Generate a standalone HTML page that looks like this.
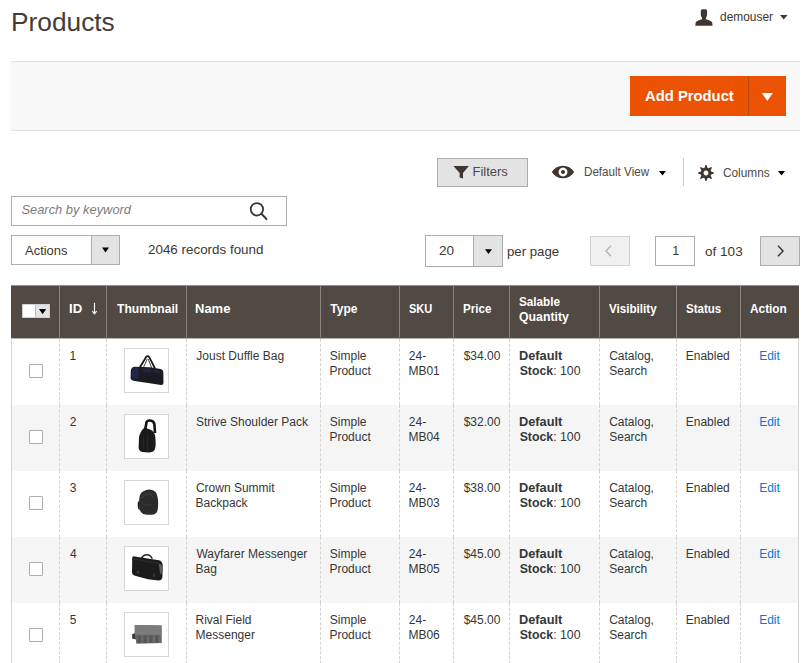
<!DOCTYPE html>
<html><head><meta charset="utf-8"><title>Products</title>
<style>
html,body{margin:0;padding:0;background:#fff;}
body{width:808px;height:663px;overflow:hidden;position:relative;font-family:"Liberation Sans",sans-serif;}
.t{position:absolute;white-space:nowrap;}
.r{position:absolute;box-sizing:border-box;}
b{font-weight:700;}
</style></head><body>
<div class="t" style="left:11.40px;top:6.62px;font-size:25.5px;line-height:31.88px;font-weight:400;color:#463c36;transform:scaleX(1.0311);transform-origin:0 0;">Products</div>
<svg class="r" style="left:694px;top:9px" width="20" height="17" viewBox="0 0 20 17"><path fill="#41362f" d="M8.2 0.3h3.4c0.9 0 1.5 0.8 1.5 1.8v3.6c0 1-0.4 1.9-1 2.6l-0.3 1.9c2.4 0.7 5.4 1.6 6.4 3.2l0.4 3.3H1.3l0.4-3.3c1-1.6 4-2.5 6.4-3.2L7.8 8.3c-0.6-0.7-1-1.6-1-2.6V2.1c0-1 0.6-1.8 1.4-1.8z"/></svg>
<div class="t" style="left:719.82px;top:10.15px;font-size:12.3px;line-height:15.38px;font-weight:400;color:#41362f;transform:scaleX(0.9704);transform-origin:0 0;">demouser</div>
<svg class="r" style="left:780px;top:15px" width="8" height="5" viewBox="0 0 8 5"><path fill="#41362f" d="M0 0h7.5L3.75 4.6z"/></svg>
<div class="r" style="left:11px;top:61px;width:789px;height:70px;background:#f8f8f8;border-top:1px solid #e3e3e3;border-bottom:1px solid #e3e3e3;"></div>
<div class="r" style="left:630px;top:76px;width:156px;height:40px;background:#eb5202;"></div>
<div class="r" style="left:748px;top:76px;width:1px;height:40px;background:#ba4608;"></div>
<div class="t" style="left:645.03px;top:86.72px;font-size:14.8px;line-height:18.5px;font-weight:700;color:#ffffff;">Add Product</div>
<svg class="r" style="left:761px;top:92px" width="13" height="10" viewBox="0 0 13 10"><path fill="#ffffff" d="M0.8 1h11L6.3 9z"/></svg>
<div class="r" style="left:437px;top:158px;width:91px;height:29px;background:#e3e3e3;border:1px solid #adadad;"></div>
<svg class="r" style="left:453px;top:166px" width="17" height="13" viewBox="0 0 17 13"><path fill="#41362f" d="M0.4 0h15.5L10 7v5.5L6.6 11.5V7z"/></svg>
<div class="t" style="left:472.46px;top:163.87px;font-size:13px;line-height:16.25px;font-weight:400;color:#514943;">Filters</div>
<svg class="r" style="left:551px;top:165px" width="24" height="14" viewBox="0 0 24 14"><path fill="#41362f" fill-rule="evenodd" d="M0.8 7C3.5 2.8 7.5 0.7 12 0.7S20.5 2.8 23.2 7C20.5 11.2 16.5 13.3 12 13.3S3.5 11.2 0.8 7zM12 2.6a4.4 4.4 0 1 0 0.01 0zM12 5a2 2 0 1 1-0.01 0z"/></svg>
<div class="t" style="left:584.47px;top:165.34px;font-size:12px;line-height:15.0px;font-weight:400;color:#514943;transform:scaleX(0.9692);transform-origin:0 0;">Default View</div>
<svg class="r" style="left:659px;top:171px" width="8" height="5" viewBox="0 0 8 5"><path fill="#000" d="M0 0h7L3.5 4.6z"/></svg>
<div class="r" style="left:683px;top:158px;width:1px;height:28px;background:#cccccc;"></div>
<svg class="r" style="left:697px;top:164px" width="18" height="18" viewBox="0 0 18 18"><path fill="#41362f" fill-rule="evenodd" d="M7.60 3.78 L8.45 1.12 L9.55 1.12 L10.40 3.78 L11.03 4.10 L11.70 4.32 L14.18 3.04 L14.96 3.82 L13.68 6.30 L13.90 6.97 L14.22 7.60 L16.88 8.45 L16.88 9.55 L14.22 10.40 L13.90 11.03 L13.68 11.70 L14.96 14.18 L14.18 14.96 L11.70 13.68 L11.03 13.90 L10.40 14.22 L9.55 16.88 L8.45 16.88 L7.60 14.22 L6.97 13.90 L6.30 13.68 L3.82 14.96 L3.04 14.18 L4.32 11.70 L4.10 11.03 L3.78 10.40 L1.12 9.55 L1.12 8.45 L3.78 7.60 L4.10 6.97 L4.32 6.30 L3.04 3.82 L3.82 3.04 L6.30 4.32 L6.97 4.10Z M9 6.55 A2.45 2.45 0 1 0 9.01 6.55Z"/></svg>
<div class="t" style="left:722.81px;top:165.94px;font-size:12px;line-height:15.0px;font-weight:400;color:#514943;transform:scaleX(0.9845);transform-origin:0 0;">Columns</div>
<svg class="r" style="left:778px;top:171px" width="8" height="5" viewBox="0 0 8 5"><path fill="#000" d="M0 0h7L3.5 4.6z"/></svg>
<div class="r" style="left:11px;top:196px;width:276px;height:30px;background:#fff;border:1px solid #adadad;"></div>
<div class="t" style="left:21.41px;top:202.47px;font-size:12.9px;line-height:16.12px;font-weight:400;color:#7d7d7d;font-style:italic;">Search by keyword</div>
<svg class="r" style="left:248px;top:201px" width="22" height="20" viewBox="0 0 22 20"><circle cx="8.9" cy="8.3" r="6.2" fill="none" stroke="#3a3330" stroke-width="1.75"/><path d="M13.4 12.8l5.6 5.8" stroke="#3a3330" stroke-width="2"/></svg>
<div class="r" style="left:11px;top:235px;width:109px;height:30px;background:#fff;border:1px solid #adadad;"></div>
<div class="r" style="left:91px;top:236px;width:28px;height:28px;background:#e3e3e3;border-left:1px solid #adadad;"></div>
<div class="t" style="left:25.10px;top:242.56px;font-size:12.8px;line-height:16.0px;font-weight:400;color:#41362f;transform:scaleX(1.0136);transform-origin:0 0;">Actions</div>
<svg class="r" style="left:102px;top:247px" width="8" height="6" viewBox="0 0 8 6"><path fill="#000" d="M0 0.5h7L3.5 5.5z"/></svg>
<div class="t" style="left:147.73px;top:242.66px;font-size:12.5px;line-height:15.62px;font-weight:400;color:#41362f;transform:scaleX(1.0720);transform-origin:0 0;">2046 records found</div>
<div class="r" style="left:425px;top:235px;width:78px;height:32px;background:#fff;border:1px solid #adadad;"></div>
<div class="r" style="left:473px;top:236px;width:29px;height:30px;background:#e3e3e3;border-left:1px solid #adadad;"></div>
<div class="t" style="left:438.82px;top:244.06px;font-size:12.5px;line-height:15.62px;font-weight:400;color:#41362f;transform:scaleX(1.0849);transform-origin:0 0;">20</div>
<svg class="r" style="left:485px;top:249px" width="8" height="6" viewBox="0 0 8 6"><path fill="#000" d="M0 0.3h7L3.5 5z"/></svg>
<div class="t" style="left:506.74px;top:243.76px;font-size:12.8px;line-height:16.0px;font-weight:400;color:#41362f;transform:scaleX(1.0328);transform-origin:0 0;">per page</div>
<div class="r" style="left:590px;top:236px;width:40px;height:30px;background:#f0f0f0;border:1px solid #d1d1d1;"></div>
<svg class="r" style="left:604px;top:245px" width="9" height="12" viewBox="0 0 9 12"><path d="M7 0.8L2 6l5 5.2" fill="none" stroke="#b5b5b5" stroke-width="1.4"/></svg>
<div class="r" style="left:655px;top:236px;width:40px;height:30px;background:#fff;border:1px solid #adadad;"></div>
<div class="t" style="left:672.26px;top:243.86px;font-size:12.5px;line-height:15.62px;font-weight:400;color:#41362f;">1</div>
<div class="t" style="left:705.06px;top:243.76px;font-size:12.8px;line-height:16.0px;font-weight:400;color:#41362f;transform:scaleX(1.0590);transform-origin:0 0;">of 103</div>
<div class="r" style="left:760px;top:236px;width:40px;height:30px;background:#e3e3e3;border:1px solid #adadad;"></div>
<svg class="r" style="left:776px;top:245px" width="9" height="12" viewBox="0 0 9 12"><path d="M2 0.8L7 6l-5 5.2" fill="none" stroke="#41362f" stroke-width="1.5"/></svg>
<div class="r" style="left:11px;top:286px;width:788px;height:52px;background:#514943;"></div>
<div class="r" style="left:11px;top:285px;width:788px;height:1px;background:rgba(81,73,67,0.6);"></div>
<div class="r" style="left:11px;top:338px;width:788px;height:1px;background:rgba(81,73,67,0.4);"></div>
<div class="r" style="left:59px;top:285px;width:1px;height:54px;background:linear-gradient(to bottom,rgba(138,131,127,0.6) 0,rgba(138,131,127,0.6) 1px,#8a837f 1px,#8a837f 52px,rgba(138,131,127,0.4) 52px);"></div>
<div class="r" style="left:106px;top:285px;width:1px;height:54px;background:linear-gradient(to bottom,rgba(138,131,127,0.6) 0,rgba(138,131,127,0.6) 1px,#8a837f 1px,#8a837f 52px,rgba(138,131,127,0.4) 52px);"></div>
<div class="r" style="left:186px;top:285px;width:1px;height:54px;background:linear-gradient(to bottom,rgba(138,131,127,0.6) 0,rgba(138,131,127,0.6) 1px,#8a837f 1px,#8a837f 52px,rgba(138,131,127,0.4) 52px);"></div>
<div class="r" style="left:320px;top:285px;width:1px;height:54px;background:linear-gradient(to bottom,rgba(138,131,127,0.6) 0,rgba(138,131,127,0.6) 1px,#8a837f 1px,#8a837f 52px,rgba(138,131,127,0.4) 52px);"></div>
<div class="r" style="left:399px;top:285px;width:1px;height:54px;background:linear-gradient(to bottom,rgba(138,131,127,0.6) 0,rgba(138,131,127,0.6) 1px,#8a837f 1px,#8a837f 52px,rgba(138,131,127,0.4) 52px);"></div>
<div class="r" style="left:453px;top:285px;width:1px;height:54px;background:linear-gradient(to bottom,rgba(138,131,127,0.6) 0,rgba(138,131,127,0.6) 1px,#8a837f 1px,#8a837f 52px,rgba(138,131,127,0.4) 52px);"></div>
<div class="r" style="left:509px;top:285px;width:1px;height:54px;background:linear-gradient(to bottom,rgba(138,131,127,0.6) 0,rgba(138,131,127,0.6) 1px,#8a837f 1px,#8a837f 52px,rgba(138,131,127,0.4) 52px);"></div>
<div class="r" style="left:599px;top:285px;width:1px;height:54px;background:linear-gradient(to bottom,rgba(138,131,127,0.6) 0,rgba(138,131,127,0.6) 1px,#8a837f 1px,#8a837f 52px,rgba(138,131,127,0.4) 52px);"></div>
<div class="r" style="left:676px;top:285px;width:1px;height:54px;background:linear-gradient(to bottom,rgba(138,131,127,0.6) 0,rgba(138,131,127,0.6) 1px,#8a837f 1px,#8a837f 52px,rgba(138,131,127,0.4) 52px);"></div>
<div class="r" style="left:740px;top:285px;width:1px;height:54px;background:linear-gradient(to bottom,rgba(138,131,127,0.6) 0,rgba(138,131,127,0.6) 1px,#8a837f 1px,#8a837f 52px,rgba(138,131,127,0.4) 52px);"></div>
<div class="r" style="left:12px;top:405px;width:786px;height:66px;background:#f5f5f5;"></div>
<div class="r" style="left:12px;top:537px;width:786px;height:66px;background:#f5f5f5;"></div>
<svg class="r" style="left:0;top:338px" width="808" height="325"><g stroke="#d2d2d2" stroke-width="1" stroke-dasharray="3 1.85"><line x1="59.5" y1="0.90" x2="59.5" y2="66.90"/><line x1="59.5" y1="66.90" x2="59.5" y2="132.90"/><line x1="59.5" y1="132.90" x2="59.5" y2="198.90"/><line x1="59.5" y1="198.90" x2="59.5" y2="264.90"/><line x1="59.5" y1="264.90" x2="59.5" y2="330.90"/><line x1="106.5" y1="0.90" x2="106.5" y2="66.90"/><line x1="106.5" y1="66.90" x2="106.5" y2="132.90"/><line x1="106.5" y1="132.90" x2="106.5" y2="198.90"/><line x1="106.5" y1="198.90" x2="106.5" y2="264.90"/><line x1="106.5" y1="264.90" x2="106.5" y2="330.90"/><line x1="186.5" y1="0.90" x2="186.5" y2="66.90"/><line x1="186.5" y1="66.90" x2="186.5" y2="132.90"/><line x1="186.5" y1="132.90" x2="186.5" y2="198.90"/><line x1="186.5" y1="198.90" x2="186.5" y2="264.90"/><line x1="186.5" y1="264.90" x2="186.5" y2="330.90"/><line x1="320.5" y1="0.90" x2="320.5" y2="66.90"/><line x1="320.5" y1="66.90" x2="320.5" y2="132.90"/><line x1="320.5" y1="132.90" x2="320.5" y2="198.90"/><line x1="320.5" y1="198.90" x2="320.5" y2="264.90"/><line x1="320.5" y1="264.90" x2="320.5" y2="330.90"/><line x1="399.5" y1="0.90" x2="399.5" y2="66.90"/><line x1="399.5" y1="66.90" x2="399.5" y2="132.90"/><line x1="399.5" y1="132.90" x2="399.5" y2="198.90"/><line x1="399.5" y1="198.90" x2="399.5" y2="264.90"/><line x1="399.5" y1="264.90" x2="399.5" y2="330.90"/><line x1="453.5" y1="0.90" x2="453.5" y2="66.90"/><line x1="453.5" y1="66.90" x2="453.5" y2="132.90"/><line x1="453.5" y1="132.90" x2="453.5" y2="198.90"/><line x1="453.5" y1="198.90" x2="453.5" y2="264.90"/><line x1="453.5" y1="264.90" x2="453.5" y2="330.90"/><line x1="509.5" y1="0.90" x2="509.5" y2="66.90"/><line x1="509.5" y1="66.90" x2="509.5" y2="132.90"/><line x1="509.5" y1="132.90" x2="509.5" y2="198.90"/><line x1="509.5" y1="198.90" x2="509.5" y2="264.90"/><line x1="509.5" y1="264.90" x2="509.5" y2="330.90"/><line x1="599.5" y1="0.90" x2="599.5" y2="66.90"/><line x1="599.5" y1="66.90" x2="599.5" y2="132.90"/><line x1="599.5" y1="132.90" x2="599.5" y2="198.90"/><line x1="599.5" y1="198.90" x2="599.5" y2="264.90"/><line x1="599.5" y1="264.90" x2="599.5" y2="330.90"/><line x1="676.5" y1="0.90" x2="676.5" y2="66.90"/><line x1="676.5" y1="66.90" x2="676.5" y2="132.90"/><line x1="676.5" y1="132.90" x2="676.5" y2="198.90"/><line x1="676.5" y1="198.90" x2="676.5" y2="264.90"/><line x1="676.5" y1="264.90" x2="676.5" y2="330.90"/><line x1="740.5" y1="0.90" x2="740.5" y2="66.90"/><line x1="740.5" y1="66.90" x2="740.5" y2="132.90"/><line x1="740.5" y1="132.90" x2="740.5" y2="198.90"/><line x1="740.5" y1="198.90" x2="740.5" y2="264.90"/><line x1="740.5" y1="264.90" x2="740.5" y2="330.90"/></g></svg>
<div class="r" style="left:11px;top:338px;width:1px;height:325px;background:#d6d6d6;"></div>
<div class="r" style="left:798px;top:338px;width:1px;height:325px;background:#d6d6d6;"></div>
<div class="r" style="left:22px;top:304px;width:28px;height:14px;background:#fff;border:1px solid #d0d0d0;"></div>
<div class="r" style="left:35px;top:305px;width:14px;height:12px;background:#e3e3e3;border-left:1px solid #bdbdbd;"></div>
<svg class="r" style="left:39px;top:309px" width="8" height="6" viewBox="0 0 8 6"><path fill="#000" d="M0 0h7.2L3.6 5.2z"/></svg>
<div class="t" style="left:68.54px;top:301.74px;font-size:12px;line-height:15.0px;font-weight:700;color:#ffffff;transform:scaleX(1.0987);transform-origin:0 0;">ID</div>
<svg class="r" style="left:91px;top:302px" width="7" height="13" viewBox="0 0 7 13"><path d="M3.5 0.8v11" stroke="#fff" stroke-width="1.1"/><path d="M1.4 9.2L3.5 11.9 5.6 9.2" fill="none" stroke="#fff" stroke-width="1.1"/></svg>
<div class="t" style="left:116.68px;top:301.74px;font-size:12px;line-height:15.0px;font-weight:700;color:#ffffff;transform:scaleX(1.0084);transform-origin:0 0;">Thumbnail</div>
<div class="t" style="left:195.46px;top:301.74px;font-size:12px;line-height:15.0px;font-weight:700;color:#ffffff;transform:scaleX(1.0825);transform-origin:0 0;">Name</div>
<div class="t" style="left:330.28px;top:301.74px;font-size:12px;line-height:15.0px;font-weight:700;color:#ffffff;">Type</div>
<div class="t" style="left:408.77px;top:301.74px;font-size:12px;line-height:15.0px;font-weight:700;color:#ffffff;transform:scaleX(0.9200);transform-origin:0 0;">SKU</div>
<div class="t" style="left:462.85px;top:301.74px;font-size:12px;line-height:15.0px;font-weight:700;color:#ffffff;transform:scaleX(0.9666);transform-origin:0 0;">Price</div>
<div class="t" style="left:519.25px;top:294.74px;font-size:12px;line-height:15.0px;font-weight:700;color:#ffffff;transform:scaleX(0.9753);transform-origin:0 0;">Salable</div>
<div class="t" style="left:519.11px;top:309.54px;font-size:12px;line-height:15.0px;font-weight:700;color:#ffffff;transform:scaleX(1.0245);transform-origin:0 0;">Quantity</div>
<div class="t" style="left:608.94px;top:301.74px;font-size:12px;line-height:15.0px;font-weight:700;color:#ffffff;transform:scaleX(0.9690);transform-origin:0 0;">Visibility</div>
<div class="t" style="left:686.46px;top:301.74px;font-size:12px;line-height:15.0px;font-weight:700;color:#ffffff;transform:scaleX(0.9576);transform-origin:0 0;">Status</div>
<div class="t" style="left:750.00px;top:301.74px;font-size:12px;line-height:15.0px;font-weight:700;color:#ffffff;transform:scaleX(0.9862);transform-origin:0 0;">Action</div>
<div class="r" style="left:29px;top:364px;width:14px;height:14px;background:#fff;border:1px solid #adadad;border-radius:1px;"></div>
<div class="t" style="left:69.40px;top:349.14px;font-size:12px;line-height:15.0px;font-weight:400;color:#363636;">1</div>
<div class="r" style="left:124px;top:348px;width:45px;height:45px;background:#fff;border:1px solid #d6d6d6;"></div>
<div class="r" style="left:124px;top:348px;width:45px;height:45px"><svg width="45" height="45" viewBox="0 0 45 45"><path d="M15.5 20L22 9.2Q23.7 7.2 25.3 9.2L31 20.5" fill="none" stroke="#1a1a1a" stroke-width="1.8"/><path d="M19 20.5L23.2 11M28 20.8L24.2 11" fill="none" stroke="#333" stroke-width="0.9"/><path d="M6.8 23Q7 19 11 18.8l15 0.5 10.5 1.8q2.8 0.6 2.8 3.5l0.2 10.5q-0.2 2.2-2.5 2l-13-2-13.5-2.2Q6.5 32.3 6.6 30z" fill="#1b1c22"/><path d="M8 22.5Q8.5 19.5 11 19.5l3.5 0.3v11.3l-3.5-0.6Q8 30.3 8 28z" fill="#23264a"/><path d="M19 20.4l8 0.2-0.3 4-7.7-0.3z" fill="#23264a" opacity="0.9"/><path d="M29 21.5l7 1.2v3l-7-1z" fill="#222543" opacity="0.8"/></svg></div>
<div class="t" style="left:196.32px;top:349.14px;font-size:12px;line-height:15.0px;font-weight:400;color:#363636;">Joust Duffle Bag</div>
<div class="t" style="left:329.86px;top:349.14px;font-size:12px;line-height:15.0px;font-weight:400;color:#363636;">Simple</div>
<div class="t" style="left:329.44px;top:364.14px;font-size:12px;line-height:15.0px;font-weight:400;color:#363636;">Product</div>
<div class="t" style="left:408.80px;top:349.14px;font-size:12px;line-height:15.0px;font-weight:400;color:#363636;">24-</div>
<div class="t" style="left:408.44px;top:364.14px;font-size:12px;line-height:15.0px;font-weight:400;color:#363636;">MB01</div>
<div class="t" style="left:463.68px;top:349.14px;font-size:12px;line-height:15.0px;font-weight:400;color:#363636;">$34.00</div>
<div class="t" style="left:519.37px;top:348.85px;font-size:12.3px;line-height:15.38px;font-weight:700;color:#363636;transform:scaleX(1.0390);transform-origin:0 0;">Default</div>
<div class="t" style="left:519.65px;top:363.85px;font-size:12.3px;line-height:15.38px;font-weight:400;color:#363636;"><b>Stock</b>: 100</div>
<div class="t" style="left:609.20px;top:349.14px;font-size:12px;line-height:15.0px;font-weight:400;color:#363636;">Catalog,</div>
<div class="t" style="left:609.26px;top:364.14px;font-size:12px;line-height:15.0px;font-weight:400;color:#363636;">Search</div>
<div class="t" style="left:685.74px;top:349.14px;font-size:12px;line-height:15.0px;font-weight:400;color:#363636;">Enabled</div>
<div class="t" style="left:759.14px;top:349.14px;font-size:12px;line-height:15.0px;font-weight:400;color:#007bdb;">Edit</div>
<div class="r" style="left:29px;top:430px;width:14px;height:14px;background:#fff;border:1px solid #adadad;border-radius:1px;"></div>
<div class="t" style="left:69.70px;top:415.14px;font-size:12px;line-height:15.0px;font-weight:400;color:#363636;">2</div>
<div class="r" style="left:124px;top:414px;width:45px;height:45px;background:#fff;border:1px solid #d6d6d6;"></div>
<div class="r" style="left:124px;top:414px;width:45px;height:45px"><svg width="45" height="45" viewBox="0 0 45 45"><path d="M21.5 14.5L22.5 8.2Q23.2 6.4 25.5 6.5L27.5 6.8Q30 7.5 30.4 10.5L31 19" fill="none" stroke="#141414" stroke-width="2.6"/><path d="M19.8 12.5l2.6 0.4 0.6 3.2-2.8-0.4z" fill="#333"/><path d="M15 23.5Q16 17.5 20.5 13.5L26 15.5Q30.8 17 31.3 23Q32.2 32 30.8 35.5Q29.5 38.5 24.5 38.5L18.5 38Q15 37.2 14.6 34z" fill="#1a1a1a"/><path d="M19 24l0.4 12M23.5 22l0.2 14.5" stroke="#2e2e2e" stroke-width="0.8"/></svg></div>
<div class="t" style="left:195.96px;top:415.14px;font-size:12px;line-height:15.0px;font-weight:400;color:#363636;">Strive Shoulder Pack</div>
<div class="t" style="left:329.86px;top:415.14px;font-size:12px;line-height:15.0px;font-weight:400;color:#363636;">Simple</div>
<div class="t" style="left:329.44px;top:430.14px;font-size:12px;line-height:15.0px;font-weight:400;color:#363636;">Product</div>
<div class="t" style="left:408.80px;top:415.14px;font-size:12px;line-height:15.0px;font-weight:400;color:#363636;">24-</div>
<div class="t" style="left:408.44px;top:430.14px;font-size:12px;line-height:15.0px;font-weight:400;color:#363636;">MB04</div>
<div class="t" style="left:463.68px;top:415.14px;font-size:12px;line-height:15.0px;font-weight:400;color:#363636;">$32.00</div>
<div class="t" style="left:519.37px;top:414.85px;font-size:12.3px;line-height:15.38px;font-weight:700;color:#363636;transform:scaleX(1.0390);transform-origin:0 0;">Default</div>
<div class="t" style="left:519.65px;top:429.85px;font-size:12.3px;line-height:15.38px;font-weight:400;color:#363636;"><b>Stock</b>: 100</div>
<div class="t" style="left:609.20px;top:415.14px;font-size:12px;line-height:15.0px;font-weight:400;color:#363636;">Catalog,</div>
<div class="t" style="left:609.26px;top:430.14px;font-size:12px;line-height:15.0px;font-weight:400;color:#363636;">Search</div>
<div class="t" style="left:685.74px;top:415.14px;font-size:12px;line-height:15.0px;font-weight:400;color:#363636;">Enabled</div>
<div class="t" style="left:759.14px;top:415.14px;font-size:12px;line-height:15.0px;font-weight:400;color:#007bdb;">Edit</div>
<div class="r" style="left:29px;top:496px;width:14px;height:14px;background:#fff;border:1px solid #adadad;border-radius:1px;"></div>
<div class="t" style="left:69.82px;top:481.14px;font-size:12px;line-height:15.0px;font-weight:400;color:#363636;">3</div>
<div class="r" style="left:124px;top:480px;width:45px;height:45px;background:#fff;border:1px solid #d6d6d6;"></div>
<div class="r" style="left:124px;top:480px;width:45px;height:45px"><svg width="45" height="45" viewBox="0 0 45 45"><path d="M15.5 17q0.5-4 3.5-5.5 3-2 6.5-2 4 0 6 2.5 2 2.5 2.5 8 0.5 6-0.5 10.5-1 3.5-4 4-3.5 0.5-8 0-3.5-0.5-5-3-1.5-3-1.5-7.5 0-4 0.5-7z" fill="#2b2b2b"/><path d="M13.8 22q-0.5 4 0.5 7l1.5 1-0.5-9z" fill="#222"/><path d="M18 18q2-4 6-4.3 3.5 0 5 3.5" fill="none" stroke="#454545" stroke-width="0.9"/><path d="M18 24q4 2 10 0.5" fill="none" stroke="#3c3c3c" stroke-width="0.8"/></svg></div>
<div class="t" style="left:195.90px;top:481.14px;font-size:12px;line-height:15.0px;font-weight:400;color:#363636;">Crown Summit</div>
<div class="t" style="left:195.54px;top:496.14px;font-size:12px;line-height:15.0px;font-weight:400;color:#363636;">Backpack</div>
<div class="t" style="left:329.86px;top:481.14px;font-size:12px;line-height:15.0px;font-weight:400;color:#363636;">Simple</div>
<div class="t" style="left:329.44px;top:496.14px;font-size:12px;line-height:15.0px;font-weight:400;color:#363636;">Product</div>
<div class="t" style="left:408.80px;top:481.14px;font-size:12px;line-height:15.0px;font-weight:400;color:#363636;">24-</div>
<div class="t" style="left:408.44px;top:496.14px;font-size:12px;line-height:15.0px;font-weight:400;color:#363636;">MB03</div>
<div class="t" style="left:463.68px;top:481.14px;font-size:12px;line-height:15.0px;font-weight:400;color:#363636;">$38.00</div>
<div class="t" style="left:519.37px;top:480.85px;font-size:12.3px;line-height:15.38px;font-weight:700;color:#363636;transform:scaleX(1.0390);transform-origin:0 0;">Default</div>
<div class="t" style="left:519.65px;top:495.85px;font-size:12.3px;line-height:15.38px;font-weight:400;color:#363636;"><b>Stock</b>: 100</div>
<div class="t" style="left:609.20px;top:481.14px;font-size:12px;line-height:15.0px;font-weight:400;color:#363636;">Catalog,</div>
<div class="t" style="left:609.26px;top:496.14px;font-size:12px;line-height:15.0px;font-weight:400;color:#363636;">Search</div>
<div class="t" style="left:685.74px;top:481.14px;font-size:12px;line-height:15.0px;font-weight:400;color:#363636;">Enabled</div>
<div class="t" style="left:759.14px;top:481.14px;font-size:12px;line-height:15.0px;font-weight:400;color:#007bdb;">Edit</div>
<div class="r" style="left:29px;top:562px;width:14px;height:14px;background:#fff;border:1px solid #adadad;border-radius:1px;"></div>
<div class="t" style="left:70.06px;top:547.14px;font-size:12px;line-height:15.0px;font-weight:400;color:#363636;">4</div>
<div class="r" style="left:124px;top:546px;width:45px;height:45px;background:#fff;border:1px solid #d6d6d6;"></div>
<div class="r" style="left:124px;top:546px;width:45px;height:45px"><svg width="45" height="45" viewBox="0 0 45 45"><path d="M17.6 12.2Q19.5 8.6 23 8.8T28.3 12.8" fill="none" stroke="#2a2a2a" stroke-width="1.5"/><path d="M9.2 10.3L35 14.3Q38.4 15 38.7 19.5L38.4 31Q38 34.6 34.3 34.6L24 33.3 11 29.8Q8 29 8 26.8L8.2 12.2Q8.4 10.3 9.2 10.3z" fill="#1c1c1c"/><path d="M34.8 17.5l3.6 1.8 0.4 6-2.6 3.5z" fill="#5e5e5e"/><path d="M9.5 13l25.5 4.5" stroke="#333" stroke-width="0.8"/><path d="M13 24.5l2 0.5v3l-2-0.5zM29 27.5l2 0.4v3l-2-0.4z" fill="#3a3a3a"/></svg></div>
<div class="t" style="left:196.44px;top:547.14px;font-size:12px;line-height:15.0px;font-weight:400;color:#363636;">Wayfarer Messenger</div>
<div class="t" style="left:195.54px;top:562.14px;font-size:12px;line-height:15.0px;font-weight:400;color:#363636;">Bag</div>
<div class="t" style="left:329.86px;top:547.14px;font-size:12px;line-height:15.0px;font-weight:400;color:#363636;">Simple</div>
<div class="t" style="left:329.44px;top:562.14px;font-size:12px;line-height:15.0px;font-weight:400;color:#363636;">Product</div>
<div class="t" style="left:408.80px;top:547.14px;font-size:12px;line-height:15.0px;font-weight:400;color:#363636;">24-</div>
<div class="t" style="left:408.44px;top:562.14px;font-size:12px;line-height:15.0px;font-weight:400;color:#363636;">MB05</div>
<div class="t" style="left:463.68px;top:547.14px;font-size:12px;line-height:15.0px;font-weight:400;color:#363636;">$45.00</div>
<div class="t" style="left:519.37px;top:546.85px;font-size:12.3px;line-height:15.38px;font-weight:700;color:#363636;transform:scaleX(1.0390);transform-origin:0 0;">Default</div>
<div class="t" style="left:519.65px;top:561.85px;font-size:12.3px;line-height:15.38px;font-weight:400;color:#363636;"><b>Stock</b>: 100</div>
<div class="t" style="left:609.20px;top:547.14px;font-size:12px;line-height:15.0px;font-weight:400;color:#363636;">Catalog,</div>
<div class="t" style="left:609.26px;top:562.14px;font-size:12px;line-height:15.0px;font-weight:400;color:#363636;">Search</div>
<div class="t" style="left:685.74px;top:547.14px;font-size:12px;line-height:15.0px;font-weight:400;color:#363636;">Enabled</div>
<div class="t" style="left:759.14px;top:547.14px;font-size:12px;line-height:15.0px;font-weight:400;color:#007bdb;">Edit</div>
<div class="r" style="left:29px;top:628px;width:14px;height:14px;background:#fff;border:1px solid #adadad;border-radius:1px;"></div>
<div class="t" style="left:69.82px;top:613.14px;font-size:12px;line-height:15.0px;font-weight:400;color:#363636;">5</div>
<div class="r" style="left:124px;top:612px;width:45px;height:45px;background:#fff;border:1px solid #d6d6d6;"></div>
<div class="r" style="left:124px;top:612px;width:45px;height:45px"><svg width="45" height="45" viewBox="0 0 45 45"><path d="M10.7 13L37.5 13.5 37.8 31 12.3 31.8 11.8 27.5 8.2 26.5 8.4 22 10.8 21.2z" fill="#6a6a6a"/><path d="M10.7 13L37.5 13.5 37.6 22.8 10.8 22.6z" fill="#7b7b7b"/><path d="M13.8 23.5h3.2v7.6h-3.2zM19.6 23.5h3.2v7.5h-3.2zM25.4 23.5h3.2v7.4h-3.2zM31.2 23.5h3.2v7.3h-3.2z" fill="#575757"/><path d="M8.3 22.3l2.6-0.8 0.6 5.6-3.2-0.6z" fill="#3c3c3c"/></svg></div>
<div class="t" style="left:195.54px;top:613.14px;font-size:12px;line-height:15.0px;font-weight:400;color:#363636;">Rival Field</div>
<div class="t" style="left:195.54px;top:628.14px;font-size:12px;line-height:15.0px;font-weight:400;color:#363636;">Messenger</div>
<div class="t" style="left:329.86px;top:613.14px;font-size:12px;line-height:15.0px;font-weight:400;color:#363636;">Simple</div>
<div class="t" style="left:329.44px;top:628.14px;font-size:12px;line-height:15.0px;font-weight:400;color:#363636;">Product</div>
<div class="t" style="left:408.80px;top:613.14px;font-size:12px;line-height:15.0px;font-weight:400;color:#363636;">24-</div>
<div class="t" style="left:408.44px;top:628.14px;font-size:12px;line-height:15.0px;font-weight:400;color:#363636;">MB06</div>
<div class="t" style="left:463.68px;top:613.14px;font-size:12px;line-height:15.0px;font-weight:400;color:#363636;">$45.00</div>
<div class="t" style="left:519.37px;top:612.85px;font-size:12.3px;line-height:15.38px;font-weight:700;color:#363636;transform:scaleX(1.0390);transform-origin:0 0;">Default</div>
<div class="t" style="left:519.65px;top:627.85px;font-size:12.3px;line-height:15.38px;font-weight:400;color:#363636;"><b>Stock</b>: 100</div>
<div class="t" style="left:609.20px;top:613.14px;font-size:12px;line-height:15.0px;font-weight:400;color:#363636;">Catalog,</div>
<div class="t" style="left:609.26px;top:628.14px;font-size:12px;line-height:15.0px;font-weight:400;color:#363636;">Search</div>
<div class="t" style="left:685.74px;top:613.14px;font-size:12px;line-height:15.0px;font-weight:400;color:#363636;">Enabled</div>
<div class="t" style="left:759.14px;top:613.14px;font-size:12px;line-height:15.0px;font-weight:400;color:#007bdb;">Edit</div>
</body></html>
